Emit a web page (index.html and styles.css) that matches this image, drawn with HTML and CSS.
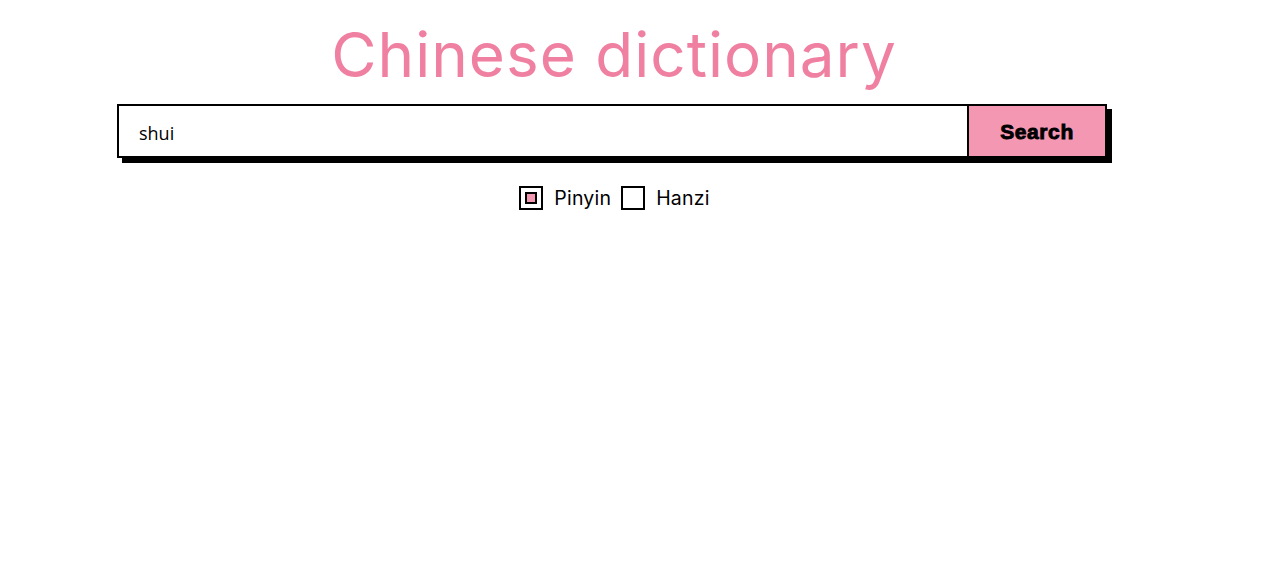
FILE: index.html
```html
<!DOCTYPE html>
<html>
<head>
<meta charset="utf-8">
<link rel="stylesheet" href="styles.css">
</head>
<body>
<main class="page">
  <h1 class="title">Chinese dictionary</h1>
  <form class="search">
    <input class="search-input" type="text" value="shui">
    <button class="search-btn" type="button">Search</button>
  </form>
  <div class="modes">
    <label class="mode"><span class="box checked"><span class="dot"></span></span><span class="mode-text">Pinyin</span></label>
    <label class="mode"><span class="box"></span><span class="mode-text">Hanzi</span></label>
  </div>
</main>
</body>
</html>
```
FILE: styles.css
```css
html, body { margin: 0; padding: 0; background: #fff; }
.page {
  width: 1224px;
  display: flex;
  flex-direction: column;
  align-items: center;
}
.title {
  margin: 17px 0 0;
  padding-left: 4px;
  font-family: "Inter", sans-serif;
  font-weight: 400;
  font-size: 62px;
  line-height: 76px;
  color: #f080a1;
  letter-spacing: 1px;
}
.search {
  margin-top: 11px;
  display: flex;
  width: 990px;
  height: 54px;
  box-shadow: 5px 5px 0 #000;
}
.search-input {
  flex: 1;
  box-sizing: border-box;
  height: 54px;
  border: 2px solid #000;
  border-right: none;
  padding: 3px 0 0 20px;
  font-family: "Open Sans", sans-serif;
  font-size: 18px;
  color: #000;
  outline: none;
  margin: 0;
}
.search-btn {
  box-sizing: border-box;
  width: 140px;
  height: 54px;
  margin: 0;
  padding: 1px 0 0;
  border: 2px solid #000;
  background: #f497b3;
  font-family: "Liberation Sans", sans-serif;
  font-weight: 900;
  font-size: 21px;
  color: #000;
  -webkit-text-stroke: 0.9px #000;
  letter-spacing: 0.6px;
}
.modes {
  margin-top: 28px;
  padding-left: 5px;
  display: flex;
  align-items: center;
  gap: 10px;
}
.mode { display: flex; align-items: center; gap: 11px; }
.box {
  box-sizing: border-box;
  width: 24px;
  height: 24px;
  border: 2px solid #000;
  display: flex;
  align-items: center;
  justify-content: center;
}
.dot {
  box-sizing: border-box;
  width: 12px;
  height: 12px;
  border: 2px solid #000;
  background: #f497b3;
}
.mode-text {
  font-family: "Inter", sans-serif;
  font-size: 19.5px;
  letter-spacing: 0.2px;
  color: #000;
}
```
